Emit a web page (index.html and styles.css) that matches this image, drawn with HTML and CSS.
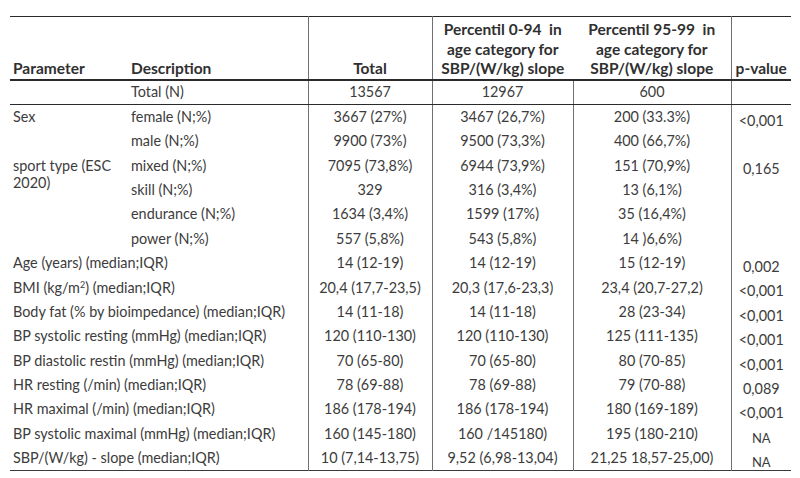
FILE: index.html
```html
<!DOCTYPE html>
<html>
<head>
<meta charset="utf-8">
<link rel="stylesheet" href="styles.css">
</head>
<body>
<table class="data">
  <colgroup>
    <col class="c-param"><col class="c-desc"><col class="c-total"><col class="c-p1"><col class="c-p2"><col class="c-pv">
  </colgroup>
  <thead>
    <tr class="head">
      <th class="left">Parameter</th>
      <th class="left">Description</th>
      <th class="vl">Total</th>
      <th class="vl">Percentil 0-94&nbsp; in<br>age category for<br>SBP/(W/kg) slope</th>
      <th>Percentil 95-99&nbsp; in<br>age category for<br>SBP/(W/kg) slope</th>
      <th class="vl">p-value</th>
    </tr>
  </thead>
  <tbody>
    <tr class="total-row">
      <td></td><td class="left">Total (N)</td><td class="vl">13567</td><td class="vl">12967</td><td class="vl">600</td><td class="vl"></td>
    </tr>
    <tr>
      <td class="left">Sex</td><td class="left">female (N;%)</td><td class="vl">3667 (27%)</td><td class="vl">3467 (26,7%)</td><td class="vl">200 (33.3%)</td><td class="vl pv">&lt;0,001</td>
    </tr>
    <tr>
      <td></td><td class="left">male (N;%)</td><td class="vl">9900 (73%)</td><td class="vl">9500 (73,3%)</td><td class="vl">400 (66,7%)</td><td class="vl pv"></td>
    </tr>
    <tr>
      <td class="left wrap" rowspan="2">sport type (ESC 2020)</td><td class="left">mixed (N;%)</td><td class="vl">7095 (73,8%)</td><td class="vl">6944 (73,9%)</td><td class="vl">151 (70,9%)</td><td class="vl pv">0,165</td>
    </tr>
    <tr>
      <td class="left">skill (N;%)</td><td class="vl">329</td><td class="vl">316 (3,4%)</td><td class="vl">13 (6,1%)</td><td class="vl pv"></td>
    </tr>
    <tr>
      <td></td><td class="left">endurance (N;%)</td><td class="vl">1634 (3,4%)</td><td class="vl">1599 (17%)</td><td class="vl">35 (16,4%)</td><td class="vl pv"></td>
    </tr>
    <tr>
      <td></td><td class="left">power (N;%)</td><td class="vl">557 (5,8%)</td><td class="vl">543 (5,8%)</td><td class="vl">14 )6,6%)</td><td class="vl pv"></td>
    </tr>
    <tr>
      <td class="left" colspan="2">Age (years) (median;IQR)</td><td class="vl">14 (12-19)</td><td class="vl">14 (12-19)</td><td class="vl">15 (12-19)</td><td class="vl pv">0,002</td>
    </tr>
    <tr>
      <td class="left" colspan="2">BMI (kg/m<sup>2</sup>) (median;IQR)</td><td class="vl">20,4 (17,7-23,5)</td><td class="vl">20,3 (17,6-23,3)</td><td class="vl">23,4 (20,7-27,2)</td><td class="vl pv">&lt;0,001</td>
    </tr>
    <tr>
      <td class="left" colspan="2">Body fat (% by bioimpedance) (median;IQR)</td><td class="vl">14 (11-18)</td><td class="vl">14 (11-18)</td><td class="vl">28 (23-34)</td><td class="vl pv">&lt;0,001</td>
    </tr>
    <tr>
      <td class="left" colspan="2">BP systolic resting (mmHg) (median;IQR)</td><td class="vl">120 (110-130)</td><td class="vl">120 (110-130)</td><td class="vl">125 (111-135)</td><td class="vl pv">&lt;0,001</td>
    </tr>
    <tr>
      <td class="left" colspan="2">BP diastolic restin (mmHg) (median;IQR)</td><td class="vl">70 (65-80)</td><td class="vl">70 (65-80)</td><td class="vl">80 (70-85)</td><td class="vl pv">&lt;0,001</td>
    </tr>
    <tr>
      <td class="left" colspan="2">HR resting (/min) (median;IQR)</td><td class="vl">78 (69-88)</td><td class="vl">78 (69-88)</td><td class="vl">79 (70-88)</td><td class="vl pv">0,089</td>
    </tr>
    <tr>
      <td class="left" colspan="2">HR maximal (/min) (median;IQR)</td><td class="vl">186 (178-194)</td><td class="vl">186 (178-194)</td><td class="vl">180 (169-189)</td><td class="vl pv">&lt;0,001</td>
    </tr>
    <tr>
      <td class="left" colspan="2">BP systolic maximal (mmHg) (median;IQR)</td><td class="vl">160 (145-180)</td><td class="vl">160 /145180)</td><td class="vl">195 (180-210)</td><td class="vl pv na">NA</td>
    </tr>
    <tr>
      <td class="left" colspan="2">SBP/(W/kg) - slope (median;IQR)</td><td class="vl">10 (7,14-13,75)</td><td class="vl">9,52 (6,98-13,04)</td><td class="vl">21,25 18,57-25,00)</td><td class="vl pv na">NA</td>
    </tr>
  </tbody>
</table>
</body>
</html>
```

FILE: styles.css
```css
html, body {
  margin: 0;
  padding: 0;
  background: #ffffff;
}

body {
  padding: 16px 0 0 10px;
  font-family: Lato, "Noto Sans", sans-serif;
  font-size: 14.4px;
  color: #3c3c3c;
}

.data {
  border-collapse: collapse;
  table-layout: fixed;
  width: 781px;
  border-top: 1px solid #2a2a2a;
  border-bottom: 1.5px solid #3a3a3a;
}

.c-param { width: 118px; }
.c-desc { width: 180px; }
.c-total { width: 124px; }
.c-p1 { width: 141px; }
.c-p2 { width: 158px; }
.c-pv { width: 60px; }

th, td {
  padding: 0 3px;
  text-align: center;
  line-height: 16px;
  white-space: nowrap;
  vertical-align: middle;
}

.left {
  text-align: left;
}

.wrap {
  white-space: normal;
  vertical-align: top;
  padding-top: 5px;
  line-height: 16.5px;
}

.head {
  height: 63px;
}

.head th {
  font-size: 15.5px;
  font-weight: bold;
  line-height: 19.5px;
  vertical-align: bottom;
  padding-bottom: 0;
  color: #303030;
  border-bottom: 2px solid #2a2a2a;
}

.vl {
  border-left: 1px solid #707070;
}

.total-row {
  height: 25px;
}

.total-row td {
  border-bottom: 1px solid #2a2a2a;
}

tbody tr {
  height: 24.4px;
}

td.pv {
  vertical-align: top;
  padding-top: 8px;
}

td.na {
  font-size: 13px;
}

sup {
  font-size: 9px;
  line-height: 0;
  vertical-align: 5px;
}
```
